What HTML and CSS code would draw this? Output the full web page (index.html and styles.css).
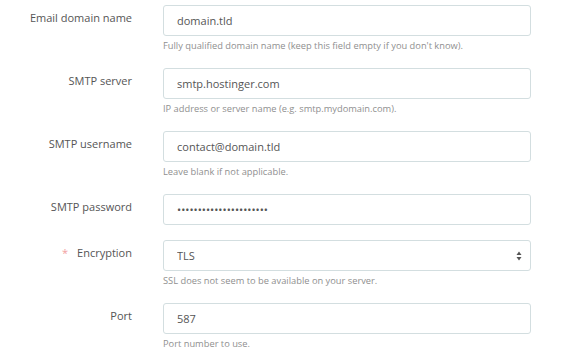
FILE: index.html
```html
<!DOCTYPE html>
<html lang="en">
<head>
    <meta charset="UTF-8">
    <title>Mail settings</title>
    <link rel="stylesheet" href="styles.css">
</head>
<body>
    <form class="mail-form">
        <div class="form-row">
            <label class="form-label" for="domain">Email domain name</label>
            <div class="form-field">
                <input type="text" id="domain" class="form-input" value="domain.tld">
                <p class="form-help">Fully qualified domain name (keep this field empty if you don't know).</p>
            </div>
        </div>
        <div class="form-row">
            <label class="form-label" for="server">SMTP server</label>
            <div class="form-field">
                <input type="text" id="server" class="form-input" value="smtp.hostinger.com">
                <p class="form-help">IP address or server name (e.g. smtp.mydomain.com).</p>
            </div>
        </div>
        <div class="form-row">
            <label class="form-label" for="username">SMTP username</label>
            <div class="form-field">
                <input type="text" id="username" class="form-input" value="contact@domain.tld">
                <p class="form-help">Leave blank if not applicable.</p>
            </div>
        </div>
        <div class="form-row no-help">
            <label class="form-label" for="password">SMTP password</label>
            <div class="form-field">
                <input type="password" id="password" class="form-input" value="abcdefghijklmnopqrstuv">
            </div>
        </div>
        <div class="form-row">
            <label class="form-label" for="encryption"><span class="required">*</span>Encryption</label>
            <div class="form-field">
                <div class="select-wrap">
                    <select id="encryption" class="form-input form-select">
                        <option>TLS</option>
                        <option>SSL</option>
                        <option>None</option>
                    </select>
                    <svg class="select-arrows" width="6" height="10" viewBox="0 0 6 10">
                        <path d="M3 0.5L5.5 4H0.5z" fill="#555"></path>
                        <path d="M3 9.5L5.5 6H0.5z" fill="#555"></path>
                    </svg>
                </div>
                <p class="form-help">SSL does not seem to be available on your server.</p>
            </div>
        </div>
        <div class="form-row">
            <label class="form-label" for="port">Port</label>
            <div class="form-field">
                <input type="text" id="port" class="form-input" value="587">
                <p class="form-help">Port number to use.</p>
            </div>
        </div>
    </form>
</body>
</html>
```

FILE: styles.css
```css
body {
    margin: 0;
    background-color: #ffffff;
    font-family: 'Open Sans', sans-serif;
    color: #555555;
}

.mail-form {
    padding-top: 5px;
    width: 531px;
}

.form-row {
    display: grid;
    grid-template-columns: 132px 368px;
    column-gap: 31px;
    margin-bottom: 14px;
}

.form-row.no-help {
    margin-bottom: 15px;
}

.form-label {
    text-align: right;
    font-size: 11px;
    line-height: 20px;
    padding-top: 3px;
    color: #555555;
}

.required {
    color: #f2a0a0;
    margin-right: 9px;
    font-size: 11px;
}

.form-input {
    box-sizing: border-box;
    display: block;
    width: 100%;
    height: 31px;
    margin: 0;
    padding: 0 13px;
    border: 1px solid #d3dee0;
    border-radius: 3px;
    background-color: #ffffff;
    font-family: 'Open Sans', sans-serif;
    font-size: 11px;
    color: #555555;
    outline: none;
}

.select-wrap {
    position: relative;
}

.form-select {
    appearance: none;
    -webkit-appearance: none;
}

.select-arrows {
    position: absolute;
    right: 9px;
    top: 11px;
}

.form-help {
    margin: 2px 0 0;
    font-size: 9.3px;
    line-height: 16px;
    color: #8f8f8f;
}
```
